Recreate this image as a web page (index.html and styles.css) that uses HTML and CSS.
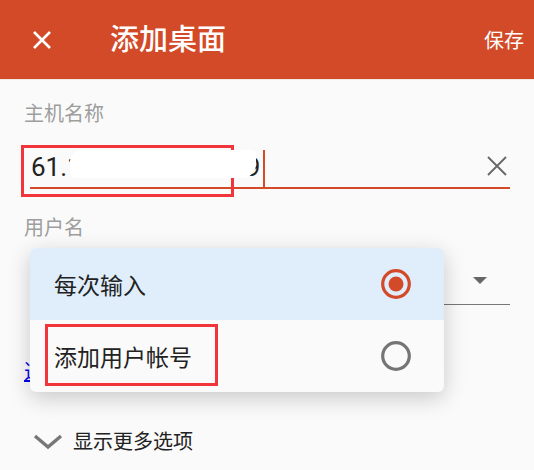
FILE: index.html
```html
<!DOCTYPE html>
<html lang="zh-CN">
<head>
    <meta charset="UTF-8">
    <meta name="viewport" content="width=device-width, initial-scale=1.0">
    <title>添加桌面</title>
    <link rel="stylesheet" href="styles.css">
</head>
<body>

<div class="toolbar">
    <svg class="close-icon" width="20" height="20" viewBox="0 0 20 20">
        <path d="M2 2 L18 18 M18 2 L2 18" stroke="#fff" stroke-width="2.6" fill="none"/>
    </svg>
    <h1 class="title">添加桌面</h1>
    <span class="save">保存</span>
</div>

<div class="content">
    <div class="field-label">主机名称</div>
    <div class="input-row">
        <span class="value">61.1<span class="redact"></span>9</span><span class="caret"></span>
        <svg class="clear-icon" width="22" height="22" viewBox="0 0 22 22">
            <path d="M2 2 L20 20 M20 2 L2 20" stroke="#666" stroke-width="1.8" fill="none"/>
        </svg>
    </div>
    <div class="mark mark-host"></div>

    <div class="field-label field-gap">用户名</div>
    <div class="select-row">
        <span class="select-arrow"></span>
    </div>

    <a class="link" href="#">选</a>

    <div class="more">
        <svg class="chevron" width="30" height="16" viewBox="0 0 30 16">
            <path d="M2 2 L15 13 L28 2" stroke="#777" stroke-width="3.4" fill="none"/>
        </svg>
        <span>显示更多选项</span>
    </div>

    <div class="menu">
        <div class="menu-item selected">
            <span>每次输入</span>
            <svg width="32" height="32" viewBox="0 0 32 32">
                <circle cx="16" cy="16" r="13.3" stroke="#d24a27" stroke-width="3.2" fill="none"/>
                <circle cx="16" cy="16" r="7.5" fill="#d24a27"/>
            </svg>
        </div>
        <div class="menu-item">
            <span>添加用户帐号</span>
            <svg width="32" height="32" viewBox="0 0 32 32">
                <circle cx="16" cy="16" r="13.3" stroke="#757575" stroke-width="3.2" fill="none"/>
            </svg>
            <div class="mark mark-account"></div>
        </div>
    </div>
</div>

</body>
</html>
```

FILE: styles.css
```css
body {
    margin: 0;
    padding: 0;
    background-color: #fafafa;
    font-family: Roboto, "Noto Sans CJK SC", sans-serif;
    color: #222;
}

.toolbar {
    height: 80px;
    background-color: #d24a27;
    display: flex;
    align-items: center;
    padding: 0 10px 0 32px;
    border-bottom: 1px solid #efe9e6;
    box-sizing: border-box;
}

.close-icon {
    flex-shrink: 0;
}

.title {
    margin: 0 0 0 58px;
    flex: 1;
    font-size: 29px;
    font-weight: 500;
    color: #fff;
    line-height: 40px;
}

.save {
    font-size: 20px;
    color: #fff;
}

.content {
    position: relative;
    padding: 20px 24px 0 24px;
}

.field-label {
    font-size: 20px;
    line-height: 28px;
    color: #9e9e9e;
}

.field-gap {
    margin-top: 25px;
}

.input-row {
    margin: 17px 0 0 6px;
    height: 42px;
    border-bottom: 2px solid #d24a27;
    display: flex;
    align-items: center;
}

.value {
    font-size: 26px;
    color: #222;
    padding-left: 1px;
}

.redact {
    display: inline-block;
    position: relative;
    z-index: 1;
    width: 186px;
    height: 28px;
    margin: 0 -10px 0 -12px;
    vertical-align: -2px;
    background-color: #fff;
    border-radius: 12px 4px 14px 6px;
}

.caret {
    width: 2px;
    height: 37px;
    margin-left: 3px;
    background-color: #d24a27;
    align-self: flex-end;
}

.clear-icon {
    margin-left: auto;
    margin-right: 2px;
}

.select-row {
    margin: 14px 0 0 6px;
    height: 48px;
    border-bottom: 1px solid #777;
    display: flex;
    align-items: center;
    justify-content: flex-end;
}

.select-arrow {
    width: 0;
    height: 0;
    margin-right: 23px;
    border-left: 7px solid transparent;
    border-right: 7px solid transparent;
    border-top: 7px solid #666;
}

.link {
    display: inline-block;
    margin-top: 53px;
    font-size: 20px;
    line-height: 28px;
    color: #0000ee;
}

.more {
    margin: 42px 0 0 9px;
    display: flex;
    align-items: center;
    gap: 10px;
    font-size: 20px;
    line-height: 28px;
    color: #222;
}

.menu {
    position: absolute;
    left: 30px;
    top: 168px;
    width: 414px;
    background-color: #fafafa;
    border-radius: 6px;
    overflow: hidden;
    box-shadow: 0 6px 22px rgba(0, 0, 0, 0.2);
}

.menu-item {
    position: relative;
    height: 72px;
    display: flex;
    align-items: center;
    justify-content: space-between;
    padding: 0 32px 0 24px;
    font-size: 23px;
    color: #222;
}

.menu-item.selected {
    background-color: #e0eefb;
}

.mark {
    position: absolute;
    border: 3px solid #f2353a;
    box-sizing: border-box;
}

.mark-host {
    left: 21px;
    top: 65px;
    width: 213px;
    height: 52px;
}

.mark-account {
    left: 15px;
    top: 4px;
    width: 173px;
    height: 62px;
}
```
